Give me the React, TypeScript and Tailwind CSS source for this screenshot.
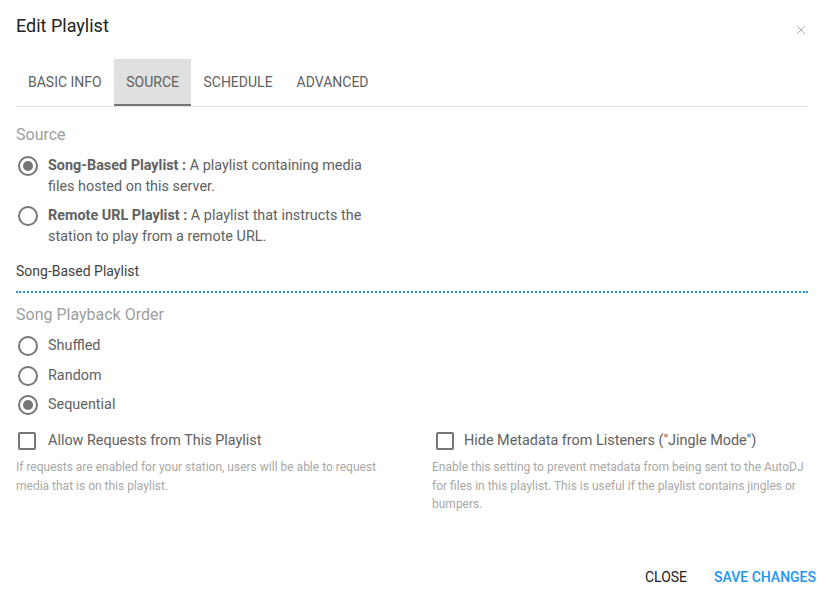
import { X } from "lucide-react"

const tabs = ["Basic Info", "Source", "Schedule", "Advanced"]

function Radio({ checked }: { checked?: boolean }) {
  return (
    <span className="w-5 h-5 shrink-0 rounded-full border-2 border-[#757575] flex items-center justify-center">
      {checked && <span className="w-[10px] h-[10px] rounded-full bg-[#757575]" />}
    </span>
  )
}

function Checkbox() {
  return <span className="w-[18px] h-[18px] shrink-0 rounded-[2px] border-2 border-[#757575]" />
}

export default function App() {
  return (
    <div className="w-[827px] h-[599px] bg-white font-['Roboto',sans-serif] relative overflow-hidden">
      <div className="px-4 pt-[14px]">
        <div className="flex items-center justify-between w-[792px]">
          <h1 className="text-[18px] leading-6 text-[#212121] font-normal">Edit Playlist</h1>
          <X className="h-[14px] w-[14px] text-[#9e9e9e] mt-2" strokeWidth={1.5} />
        </div>

        <div className="mt-[21px] flex border-b border-[#e0e0e0] w-[792px]">
          {tabs.map((t) => (
            <div
              key={t}
              className={
                t === "Source"
                  ? "h-[47px] px-[12.5px] flex items-center text-[14px] uppercase text-[#616161] bg-[#e0e0e0] border-b-2 border-[#757575] pt-[2px]"
                  : "h-[47px] px-[12px] flex items-center text-[14px] uppercase text-[#616161]"
              }
            >
              {t}
            </div>
          ))}
        </div>

        <div className="mt-[18px] text-[16px] leading-5 text-[#9e9e9e]">Source</div>

        <div className="mt-[11px] flex flex-col gap-[9px]">
          <div className="flex items-start gap-[10px] pl-[2px]">
            <Radio checked />
            <p className="text-[14.4px] leading-[21px] text-[#616161] w-[330px] -mt-[1px]">
              <b className="font-bold">Song-Based Playlist :</b> A playlist containing media files hosted on this server.
            </p>
          </div>
          <div className="flex items-start gap-[10px] pl-[2px]">
            <Radio />
            <p className="text-[14.4px] leading-[21px] text-[#616161] w-[330px] -mt-[1px]">
              <b className="font-bold">Remote URL Playlist :</b> A playlist that instructs the station to play from a remote URL.
            </p>
          </div>
        </div>

        <div className="mt-[14px] text-[14px] leading-5 text-[#424242]">Song-Based Playlist</div>
        <div className="mt-[10px] border-b-2 border-dotted border-[#2196f3] w-[792px]" />

        <div className="mt-[12px] text-[16px] leading-5 text-[#9e9e9e]">Song Playback Order</div>
        <div className="mt-[11px] flex flex-col gap-[9.5px] pl-[2px]">
          {[
            ["Shuffled", false],
            ["Random", false],
            ["Sequential", true],
          ].map(([label, c]) => (
            <div key={label as string} className="flex items-center gap-[10px] h-5">
              <Radio checked={c as boolean} />
              <span className="text-[14.4px] text-[#616161]">{label}</span>
            </div>
          ))}
        </div>

        <div className="mt-[16px] grid grid-cols-[400px_1fr] gap-4 w-[792px]">
          <div>
            <div className="flex items-center gap-[12px] pl-[2px] h-5">
              <Checkbox />
              <span className="text-[14.4px] text-[#616161]">Allow Requests from This Playlist</span>
            </div>
            <p className="mt-[7px] text-[12px] leading-[18.5px] text-[#a8a8a8] pr-6">
              If requests are enabled for your station, users will be able to request media that is on this playlist.
            </p>
          </div>
          <div>
            <div className="flex items-center gap-[10px] pl-[4px] h-5">
              <Checkbox />
              <span className="text-[14.4px] text-[#616161]">Hide Metadata from Listeners ("Jingle Mode")</span>
            </div>
            <p className="mt-[7px] text-[12px] leading-[18.5px] text-[#a8a8a8]">
              Enable this setting to prevent metadata from being sent to the AutoDJ for files in this playlist. This is useful if the playlist contains jingles or bumpers.
            </p>
          </div>
        </div>
      </div>

      <div className="absolute right-[11px] bottom-[11px] flex items-center gap-[27px]">
        <button className="text-[14px] font-normal uppercase text-[#212121]">Close</button>
        <button className="text-[14px] font-medium uppercase text-[#2196f3]">Save Changes</button>
      </div>
    </div>
  )
}
